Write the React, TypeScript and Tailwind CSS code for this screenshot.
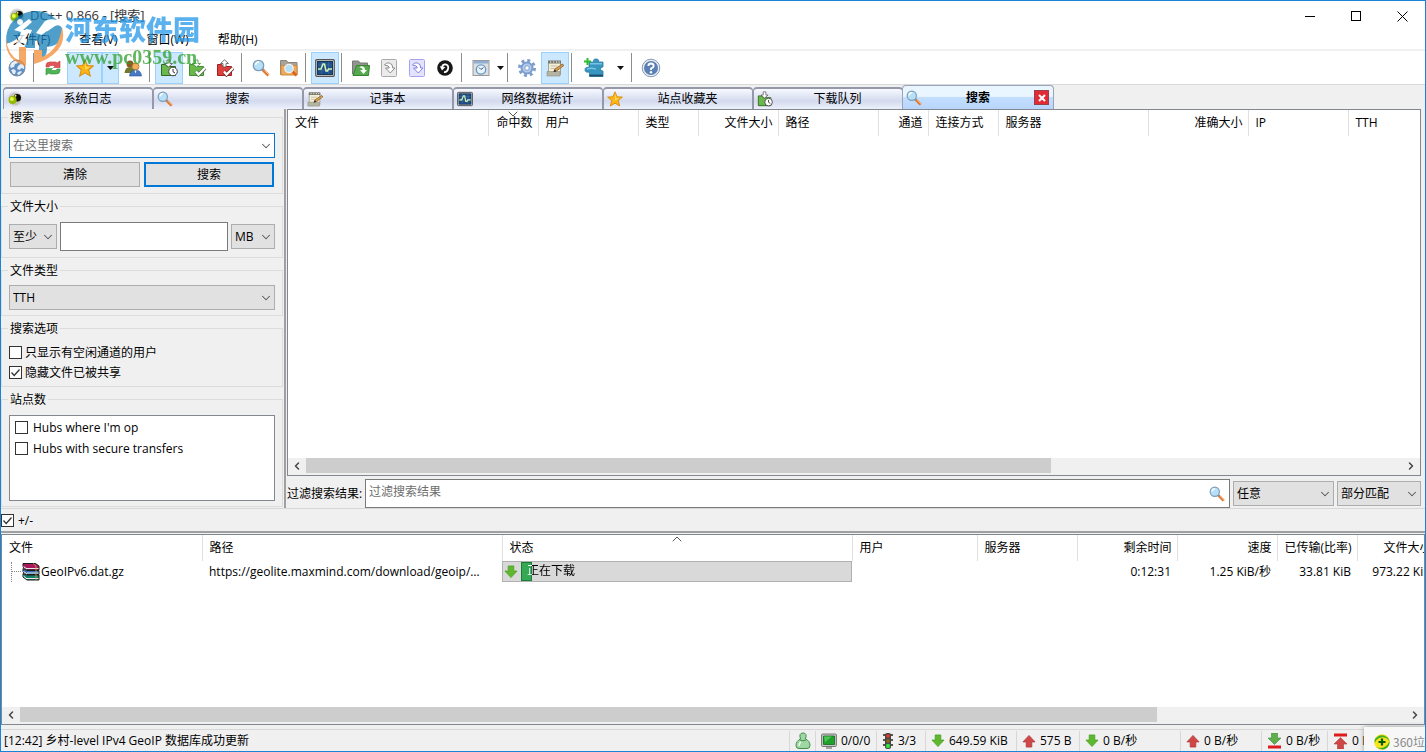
import { useState, type ReactNode } from 'react';
import { ChevronDown, ChevronLeft, ChevronRight, ChevronUp } from 'lucide-react';
import { cva } from 'class-variance-authority';
import clsx from 'clsx';

type IconProps = { className?: string };

const icon = 'h-4 w-4 shrink-0';

/* ── Icons ── */
function AppIcon({ className = icon }: IconProps) {
  return (
    <svg viewBox="0 0 16 16" className={className}>
      <circle cx="8" cy="8" r="7.5" fill="#dcdcdc" />
      <circle cx="8" cy="8" r="6.3" fill="#c3c3c3" />
      <circle cx="10.2" cy="6.8" r="3.8" fill="#0c0c0c" />
      <circle cx="5.6" cy="9" r="4" fill="#93b800" />
      <circle cx="4.9" cy="8" r="2" fill="#e8fb4a" />
      <circle cx="8.5" cy="4.8" r="1" fill="#e8fb4a" />
    </svg>
  );
}

function GlobeIcon() {
  return (
    <svg viewBox="0 0 18 18" className="h-[18px] w-[18px]">
      <circle cx="9" cy="9" r="8" fill="#5f8fc4" stroke="#7d8ea8" />
      <path d="M3 4.500Q6 1 9 2l1 2-3 1-1 3-3 1-1-2zM10 7l4-3 2 3v3l-3-1-1 2-3-1zM3 11l3-1 2 2-1 3-2 0zM10 13l3-1 1 1-3 3-2-1z" fill="#e4ecf4" />
      <path d="M4 5q4-4 9-1" fill="none" stroke="#fff" opacity=".6" />
    </svg>
  );
}

function RefreshIcon() {
  return (
    <svg viewBox="0 0 16 16" className={icon}>
      <path d="M1 7V5.500Q1 2 5 2h5q1.500 0 2 1l3-2v6.500H8.500l2-2H6Q4 5.500 4 7z" fill="#e0575b" stroke="#c2373d" strokeWidth=".6" />
      <path d="M15 9v1.500Q15 14 11 14H6q-1.500 0-2-1l-3 2V8.500h6.500l-2 2H10q2 0 2-1.500z" fill="#4fb457" stroke="#2f8f38" strokeWidth=".6" />
    </svg>
  );
}

function StarIcon({ className = icon }: IconProps) {
  return (
    <svg viewBox="0 0 16 16" className={className}>
      <path d="M8 .8l2.100 5 5.300.3-4.100 3.500 1.400 5.400L8 12.200 3.300 15l1.400-5.400L.6 6.100l5.300-.3z" fill="#fdb515" stroke="#d98b0c" strokeWidth=".9" />
      <path d="M8 2.500L9.200 7l3.300.2L8 9.500z" fill="#ffd95c" />
    </svg>
  );
}

function UsersIcon() {
  return (
    <svg viewBox="0 0 18 18" className="h-[18px] w-[18px]">
      <circle cx="6" cy="5" r="3.500" fill="#8a5a22" />
      <path d="M.5 14Q1 8 6 8t5.500 6z" fill="#6f7a2c" />
      <circle cx="11.500" cy="7.500" r="3.500" fill="#f0b060" stroke="#a8681f" strokeWidth=".7" />
      <path d="M5.500 17Q6 11 11.500 11t6 6z" fill="#4779c4" stroke="#2b5596" strokeWidth=".6" />
      <path d="M10.500 11.500h2l-1 3z" fill="#fff" />
    </svg>
  );
}

function Folder({ fill, stroke }: { fill: string; stroke: string }) {
  return <path d="M1.500 16.500v-11h4l1.500 2h8.500v9z" fill={fill} stroke={stroke} />;
}

function QueueIcon({ className = 'h-[18px] w-[18px] shrink-0' }: IconProps) {
  return (
    <svg viewBox="0 0 18 18" className={className}>
      <Folder fill="#6ab84a" stroke="#2f6b22" />
      <path d="M7 1h3v3.500h2.500l-4 3.500-4-3.500H7z" fill="#fff" stroke="#555" strokeWidth=".8" />
      <circle cx="13" cy="12.500" r="4.300" fill="#fff" stroke="#444" />
      <path d="M13 10v2.700l2 1.300" fill="none" stroke="#333" />
    </svg>
  );
}

function DownloadedIcon() {
  return (
    <svg viewBox="0 0 18 18" className="h-[18px] w-[18px]">
      <Folder fill="#6ab84a" stroke="#438f36" />
      <path d="M7 1h3v3.500h2.500l-4 3.500-4-3.500H7z" fill="#fff" stroke="#438f36" strokeWidth=".8" />
      <path d="M8 12.500l2.500 3L17 9" fill="none" stroke="#4b6e44" strokeWidth="3.800" />
      <path d="M8 12.500l2.500 3L17 9" fill="none" stroke="#fff" strokeWidth="2.400" />
    </svg>
  );
}

function UploadedIcon() {
  return (
    <svg viewBox="0 0 18 18" className="h-[18px] w-[18px]">
      <Folder fill="#df3f3c" stroke="#a31f1f" />
      <path d="M7 8V4.500H4.500l4-3.700 4 3.700H10V8z" fill="#fff" stroke="#555" strokeWidth=".8" />
      <path d="M8 12.500l2.500 3L17 9" fill="none" stroke="#6e2727" strokeWidth="3.800" />
      <path d="M8 12.500l2.500 3L17 9" fill="none" stroke="#fff" strokeWidth="2.400" />
    </svg>
  );
}

function SearchIcon({ className = 'h-[18px] w-[18px] shrink-0' }: IconProps) {
  return (
    <svg viewBox="0 0 18 18" className={className}>
      <path d="M10 10l6.500 6.500" stroke="#e2762c" strokeWidth="3" />
      <path d="M12.500 11.500l4.500 4.500" stroke="#f8bd88" strokeWidth="1" />
      <path d="M9.500 9.500l2 2" stroke="#8b95a0" strokeWidth="2.400" />
      <circle cx="6.500" cy="6.500" r="5.200" fill="#b5e0f7" stroke="#7f9bb5" strokeWidth="1.300" />
      <path d="M3.500 6Q4 3 7 3" fill="none" stroke="#fff" strokeWidth="1.500" />
    </svg>
  );
}

function FolderSearchIcon() {
  return (
    <svg viewBox="0 0 18 18" className="h-[18px] w-[18px]">
      <path d="M.5 15.500v-14h6l1.500 2h9v12z" fill="#a8a29a" stroke="#8b857c" />
      <path d="M1 16V6.500h16V16z" fill="#f0a95c" stroke="#cf8a42" />
      <path d="M12 12l4.500 4.500" stroke="#d9651e" strokeWidth="2.600" />
      <circle cx="9" cy="9.500" r="4.200" fill="#b5e0f7" stroke="#edf2f5" strokeWidth="1.300" />
    </svg>
  );
}

function StatsIcon({ className = 'h-5 w-5 shrink-0' }: IconProps) {
  return (
    <svg viewBox="0 0 20 20" className={className}>
      <rect x=".7" y="1.700" width="18.600" height="16.600" rx="1" fill="#d8d8d0" stroke="#555" strokeWidth="1.200" />
      <rect x="2.500" y="3.500" width="15" height="13" fill="#1f4f87" stroke="#16365c" />
      <path d="M3 7h14M3 12h14M6.500 4v12M13.500 4v12" stroke="#3c70a8" strokeWidth=".7" />
      <path d="M3 11h3l2-5h1.500L11 13h1.500l1-2H17" fill="none" stroke="#d3f3b3" strokeWidth="1.500" />
    </svg>
  );
}

function OpenFolderIcon() {
  return (
    <svg viewBox="0 0 18 18" className="h-[18px] w-[18px]">
      <path d="M.5 15V2h6L8 4h7.500v11z" fill="#8f9690" stroke="#747b75" />
      <path d="M1 16.500L4.500 6.500h13l-1 10z" fill="#53ab4b" stroke="#3a8334" />
      <path d="M7.500 8.500Q8.500 6.500 11 7.500q2.300 1 2 3.500h2l-3.500 4L8 11h2.500q.5-2-3-2.500z" fill="#fff" />
    </svg>
  );
}

function PageIcon({ blue }: { blue?: boolean }) {
  const line = blue ? '#a6a2ef' : '#a9a9a9';
  return (
    <svg viewBox="0 0 18 18" className="h-[18px] w-[18px]">
      <rect x="1.500" y=".5" width="15" height="17" rx="1" fill={blue ? '#e4e3fd' : '#ebebeb'} stroke={line} />
      <path
        d="M4.500 6Q6 3 9.500 4t3.200 5H15l-4.700 5L5.500 9h3.800q.3-2.500-4.800-3z"
        fill="#fff"
        stroke={blue ? '#847fe6' : '#8b8b8b'}
      />
    </svg>
  );
}

function BlackCircleIcon() {
  return (
    <svg viewBox="0 0 16 16" className={icon}>
      <circle cx="8" cy="8" r="7.800" fill="#171717" />
      <path d="M5 7Q6 3.800 9 4.500q3 1 2 4.500t-4 3" fill="none" stroke="#fff" strokeWidth="1.800" />
      <path d="M2.800 6.300l5.500.7L5 10.500z" fill="#fff" />
    </svg>
  );
}

function ClockWindowIcon() {
  return (
    <svg viewBox="0 0 18 18" className="h-[18px] w-[18px]">
      <rect x="1" y="1.500" width="16" height="15" fill="#dedede" stroke="#9a9a9a" />
      <path d="M1.500 2h15v2.500h-15z" fill="#8fb0d4" />
      <circle cx="9" cy="10.500" r="4.700" fill="#eaf3fc" stroke="#5f9bcf" strokeWidth="1.300" />
      <path d="M7 8.500l2 2 2.500-2" fill="none" stroke="#456" />
    </svg>
  );
}

function GearIcon() {
  return (
    <svg viewBox="0 0 20 20" className="h-5 w-5">
      <circle cx="10" cy="10" r="7.500" fill="none" stroke="#7d9dcc" strokeWidth="3" strokeDasharray="2.950 2.950" />
      <circle cx="10" cy="10" r="5.500" fill="#b5cbeb" stroke="#7b9dd0" strokeWidth="2" />
      <circle cx="10" cy="10" r="2.300" fill="#fff" stroke="#7b9dd0" />
    </svg>
  );
}

function NotepadIcon({ className = 'h-[18px] w-[18px] shrink-0' }: IconProps) {
  return (
    <svg viewBox="0 0 18 18" className={className}>
      <path d="M2.500 2.500h12v13h-12z" fill="#f3efd9" stroke="#a5a18e" />
      <path d="M2 1.500h13v3H2z" fill="#77776c" />
      <path d="M4 3h1.200M7 3h1.200M10 3h1.200M12.500 3h1.200" stroke="#fff" />
      <path d="M4.500 7h7M4.500 9.500h5" stroke="#c5c0aa" />
      <path d="M1 12.500h13V17H1z" fill="#b5b4a2" stroke="#8f8e7e" strokeWidth=".6" />
      <path d="M8 12.500l1-2.500 7.500-5 1.200 1.600L10.500 12z" fill="#e4a14a" stroke="#775121" strokeWidth=".8" />
      <path d="M7.500 13l1.300-2.500 1.500 1.700z" fill="#222" />
    </svg>
  );
}

function PuzzleIcon() {
  return (
    <svg viewBox="0 0 22 20" className="h-5 w-[22px]">
      <path d="M5 4h5q-1.500-3 2-3t2.500 3H19v5q-2.500 0-2.500 2t2.500 2v5.500H5.500V14Q1 15 1 11.800T5 9.500z" fill="#3795bf" stroke="#2b7ca5" strokeWidth=".8" />
      <path d="M5.500 17.500H19" stroke="#1c4e6c" strokeWidth="1.800" />
      <path d="M6 5.800h12M3 11q4-1.500 9 0" fill="none" stroke="#76c4e2" strokeWidth="1.500" />
      <path d="M3.500 0v7M0 3.500h7" stroke="#2bc02b" strokeWidth="2" />
    </svg>
  );
}

function HelpIcon() {
  return (
    <svg viewBox="0 0 20 20" className="h-5 w-5">
      <circle cx="10" cy="10" r="8.800" fill="#e9eef5" stroke="#8899b2" />
      <circle cx="10" cy="10" r="7" fill="#5a80b5" />
      <path d="M7.300 8Q7.500 5.500 10 5.500T12.700 8Q12.700 9.500 10 10.500V12" fill="none" stroke="#fff" strokeWidth="1.800" />
      <circle cx="10" cy="14.300" r="1.200" fill="#fff" />
    </svg>
  );
}

function ArchiveIcon() {
  return (
    <svg viewBox="0 0 18 18" className="h-[18px] w-[18px] shrink-0">
      <path d="M1 .5h12.500L17 3v4H5L1 4z" fill="#a8185a" stroke="#1c1c1c" />
      <path d="M1 5.500l4 2h12v4H5L1 9z" fill="#2f6fb5" stroke="#1c1c1c" />
      <path d="M1 10.500l4 1.500h12v5H5l-4-3z" fill="#15806a" stroke="#1c1c1c" />
      <path d="M5 5.500h11.500M5 10h11.500M5 15.500h11.500" stroke="#e9e9e9" />
      <path d="M1.500 3.500L5 6M1.500 8.500L5 11M1.500 13L5 16" stroke="#fff" />
      <path d="M11 .5l3 2.500v14" fill="none" stroke="#caa54a" strokeWidth=".8" />
    </svg>
  );
}

const arrowPath = 'M4.500 1h6v5.500H14L7.500 13.500 1 6.500h3.500z';

function DownIcon({ className = 'h-[14px] w-[14px] shrink-0' }: IconProps) {
  return (
    <svg viewBox="0 0 15 15" className={className}>
      <path d={arrowPath} fill="#5eb72c" stroke="#479f25" strokeWidth=".8" />
    </svg>
  );
}

function UpIcon() {
  return (
    <svg viewBox="0 0 15 15" className="h-[14px] w-[14px] shrink-0 rotate-180">
      <path d={arrowPath} fill="#d04747" stroke="#b03838" strokeWidth=".8" />
    </svg>
  );
}

function DownLimitIcon() {
  return (
    <svg viewBox="0 0 15 16" className="h-4 w-[15px] shrink-0">
      <path d="M4.500 0h6v5H14l-6.500 6.500L1 5h3.500z" fill="#5eae4c" stroke="#3c8f3c" strokeWidth=".6" />
      <path d="M1 12.500h13v3H1z" fill="#dd1c1c" />
    </svg>
  );
}

function UpLimitIcon() {
  return (
    <svg viewBox="0 0 15 16" className="h-4 w-[15px] shrink-0">
      <path d="M4.500 16h6v-5H14L7.500 4.500 1 11h3.500z" fill="#d04747" stroke="#b03838" strokeWidth=".6" />
      <path d="M1 .5h13v3H1z" fill="#dd1c1c" />
    </svg>
  );
}

function PersonIcon() {
  return (
    <svg viewBox="0 0 16 18" className="h-[18px] w-4">
      <path d="M5.500 7Q3.500 1 8 1t2.500 6q4.500 2 4.500 6.500 0 3-3 3H4q-3 0-3-3Q1 9 5.500 7z" fill="#9fd6a3" stroke="#3e8e4a" />
      <path d="M5 8q3 1.500 6 0" fill="none" stroke="#3e8e4a" />
      <path d="M4 14q0-3 2-4" fill="none" stroke="#eafbea" strokeWidth="1.500" />
    </svg>
  );
}

function MonitorIcon() {
  return (
    <svg viewBox="0 0 16 16" className={icon}>
      <rect x=".6" y="1" width="14.800" height="12.500" rx="1" fill="#c8c8c8" stroke="#767676" />
      <path d="M2.500 3h11v8.500h-11z" fill="#1fa22c" stroke="#13681b" strokeWidth=".8" />
      <path d="M3 3.500h8L4 9z" fill="#4cc557" />
      <path d="M5 15h6" stroke="#888" strokeWidth="1.500" />
    </svg>
  );
}

function TrafficIcon() {
  return (
    <svg viewBox="0 0 12 18" className="h-[18px] w-3">
      <path d="M1 3h10M1 8h10M1 13h10" stroke="#555" strokeWidth="2" />
      <rect x="3" y="1" width="6" height="16" rx="2" fill="#454545" />
      <circle cx="6" cy="4" r="2" fill="#d03b2c" />
      <circle cx="6" cy="9" r="2" fill="#86651f" />
      <circle cx="6" cy="14" r="2.200" fill="#33e03c" />
    </svg>
  );
}

function PlusBallIcon() {
  return (
    <svg viewBox="0 0 16 16" className={icon}>
      <circle cx="8" cy="8" r="7.800" fill="#f6e41c" />
      <path d="M1 5Q5 0 10 1.500q5 2 5.500 6Q12 2.500 7 3.500T1 9q-.8-2 0-4z" fill="#3fae2a" />
      <path d="M2 13q6 2.500 10-1 2.500-2 3.500-5 .5 5-3.500 7.500T2 13z" fill="#3fae2a" />
      <path d="M8 4.500v7M4.500 8h7" stroke="#075c0b" strokeWidth="2.200" />
    </svg>
  );
}

function CaretIcon() {
  return (
    <svg viewBox="0 0 7 4" className="h-1 w-[7px]">
      <path d="M0 0h7L3.500 4z" fill="#111" />
    </svg>
  );
}

/* ── Site stamp drawn over the title area ── */
function Stamp() {
  return (
    <div className="pointer-events-none absolute left-1 top-2 z-10 flex opacity-75">
      <svg viewBox="0 0 60 58" className="h-[58px] w-[60px] shrink-0">
        <path d="M1 35Q0 19 10 10 20 1 34 2q10 1 18 9-7-2-12 1l-9 12 6 2 13-9q5-2 7 2 1 10-4 15-5 4-13 4l-2-7-8 1v7H19l8-18-6-1Q13 32 1 35z" fill="#157fb9" />
        <path d="M9 21l15-11 3 3-9 8h6l-8 14q-4 5-9 6 7-10 9-18z" fill="#fff" />
        <path d="M15 10a3 3 0 1 0 .1 0z" fill="#fff" />
        <path d="M34 28l8-6v18q0 8-8 13z" fill="#157fb9" />
        <path d="M1 29Q2 45 14 52V38h7v19Q-1 51 1 29z" fill="#f38c35" />
        <path d="M57 18q4 14-5 24-8 9-23 13V41h8v7Q54 41 57 18z" fill="#f38c35" />
      </svg>
      <div className="flex flex-col pt-1">
        <span className="font-['Noto_Sans_CJK_SC',sans-serif] text-[27px] font-black leading-8 text-[#2497e8]">河东软件园</span>
        <span className="font-['Liberation_Serif',serif] text-xl font-bold leading-6 text-[#2da12d]">www.pc0359.cn</span>
      </div>
    </div>
  );
}

/* ── Toolbar ── */
const toolButton = cva('flex h-8 shrink-0 items-center justify-center border hover:bg-[#e5f3ff]', {
  variants: {
    active: { true: 'border-[#99d1ff] bg-[#cce8ff]', false: 'border-transparent' },
    size: { normal: 'w-7', wide: 'w-[35px]', arrow: 'w-[17px]', narrow: 'w-2.5' },
  },
  defaultVariants: { active: false, size: 'normal' },
});

type ToolProps = {
  label: string;
  active?: boolean;
  size?: 'normal' | 'wide' | 'arrow' | 'narrow';
  children: ReactNode;
};

function Tool({ label, active, size, children }: ToolProps) {
  return (
    <button type="button" aria-label={label} title={label} className={toolButton({ active: !!active, size })}>
      {children}
    </button>
  );
}

function Divider() {
  return <div className="ml-0.5 mr-[5px] h-[29px] w-px shrink-0 bg-[#8c8c8c]" />;
}

function Toolbar() {
  return (
    <div className="flex h-[34px] items-center border-b border-[#d9d9d9] bg-white pl-0.5">
      <Tool label="公共站点"><GlobeIcon /></Tool>
      <Divider />
      <Tool label="重新连接"><RefreshIcon /></Tool>
      <Tool label="站点收藏夹" active size="wide"><StarIcon className="h-[18px] w-[18px]" /></Tool>
      <Tool label="收藏菜单" active size="arrow"><CaretIcon /></Tool>
      <Tool label="用户"><UsersIcon /></Tool>
      <Divider />
      <Tool label="下载队列" active><QueueIcon /></Tool>
      <Tool label="已完成下载"><DownloadedIcon /></Tool>
      <Tool label="已完成上传"><UploadedIcon /></Tool>
      <Divider />
      <Tool label="搜索"><SearchIcon /></Tool>
      <Tool label="ADL 搜索"><FolderSearchIcon /></Tool>
      <Divider />
      <Tool label="网络数据统计" active><StatsIcon /></Tool>
      <Divider />
      <Tool label="打开文件列表"><OpenFolderIcon /></Tool>
      <Tool label="打开自己的列表"><PageIcon /></Tool>
      <Tool label="匹配队列"><PageIcon blue /></Tool>
      <Tool label="刷新文件列表"><BlackCircleIcon /></Tool>
      <Divider />
      <Tool label="最近"><ClockWindowIcon /></Tool>
      <Tool label="最近菜单" size="narrow"><CaretIcon /></Tool>
      <Divider />
      <Tool label="设置"><GearIcon /></Tool>
      <Tool label="记事本" active><NotepadIcon /></Tool>
      <Divider />
      <Tool label="插件" size="wide"><PuzzleIcon /></Tool>
      <Tool label="插件菜单" size="arrow"><CaretIcon /></Tool>
      <Divider />
      <Tool label="帮助"><HelpIcon /></Tool>
    </div>
  );
}

/* ── Tabs ── */
const tabs = [
  { label: '系统日志', Icon: AppIcon },
  { label: '搜索', Icon: SearchIcon },
  { label: '记事本', Icon: NotepadIcon },
  { label: '网络数据统计', Icon: StatsIcon },
  { label: '站点收藏夹', Icon: StarIcon },
  { label: '下载队列', Icon: QueueIcon },
  { label: '搜索', Icon: SearchIcon },
];

function TabStrip() {
  const [current, setCurrent] = useState(tabs.length - 1);
  return (
    <div className="flex h-6 items-end pl-0.5" role="tablist">
      {tabs.map(({ label, Icon }, i) => {
        const active = i === current;
        return (
          <div
            key={i}
            className={clsx(
              'flex min-w-0 items-center rounded-t border border-b-0 bg-linear-to-b pl-[3px] pr-1',
              active
                ? '-ml-px h-6 w-[152px] border-[#9aa5bb] from-[#e9f6ff] from-45% via-[#c3dfff] via-50% to-[#b8d4fb]'
                : 'h-[22px] w-[150px] border-t-2 border-[#9498a8] from-[#f7f9ff] via-[#d3daee] via-60% to-[#edf1fc]',
            )}
          >
            <button
              type="button"
              role="tab"
              aria-selected={active}
              onClick={() => setCurrent(i)}
              className="flex h-full min-w-0 flex-1 items-center"
            >
              <Icon className={icon} />
              <span className={clsx('flex-1 truncate text-center', active ? 'font-bold' : 'pl-1')}>{label}</span>
            </button>
            {active && (
              <button
                type="button"
                aria-label="关闭"
                className="flex h-[15px] w-[15px] items-center justify-center border border-[#99414a] bg-[#e22b35]"
              >
                <svg viewBox="0 0 8 8" className="h-2 w-2">
                  <path d="M1 1l6 6M7 1L1 7" stroke="#fff" strokeWidth="2" />
                </svg>
              </button>
            )}
          </div>
        );
      })}
    </div>
  );
}

/* ── Form parts ── */
function Select({ label, options, className }: { label: string; options: string[]; className: string }) {
  return (
    <div className={clsx('relative h-[25px] shrink-0', className)}>
      <select
        aria-label={label}
        className="h-full w-full appearance-none border border-[#adadad] bg-[#e1e1e1] pl-[3px] pr-4 outline-none"
      >
        {options.map((o) => (
          <option key={o}>{o}</option>
        ))}
      </select>
      <ChevronDown className="pointer-events-none absolute right-0.5 top-1.5 h-3.5 w-3.5 text-[#555]" strokeWidth={1.75} />
    </div>
  );
}

function Check({ label, checked, className }: { label: string; checked?: boolean; className?: string }) {
  return (
    <label className={clsx('flex items-center', className)}>
      <span className="relative h-[13px] w-[13px] shrink-0">
        <input
          type="checkbox"
          defaultChecked={checked}
          className="peer block h-[13px] w-[13px] appearance-none border border-[#333] bg-white"
        />
        <svg viewBox="0 0 13 13" className="pointer-events-none absolute inset-0 hidden h-[13px] w-[13px] peer-checked:block">
          <path d="M2.500 6.500l2.700 3L10.500 3.500" fill="none" stroke="#333" strokeWidth="1.300" />
        </svg>
      </span>
      <span className="whitespace-nowrap pt-px">{label}</span>
    </label>
  );
}

function Group({ title, className, children }: { title: string; className?: string; children: ReactNode }) {
  return (
    <fieldset className={clsx('border border-[#dcdcdc] px-[7px]', className)}>
      <legend className="-ml-px h-4 px-0.5 leading-[18px]">{title}</legend>
      {children}
    </fieldset>
  );
}

function SearchPanel() {
  return (
    <form className="flex w-[282px] shrink-0 flex-col gap-1 pb-px" onSubmit={(e) => e.preventDefault()}>
      <Group title="搜索" className="pb-1.5 pt-2">
        <div className="flex h-[25px] items-center border border-[#0078d7] bg-white pl-[3px] pr-px">
          <input
            aria-label="搜索"
            placeholder="在这里搜索"
            className="min-w-0 flex-1 outline-none placeholder:text-[#6d6d6d]"
          />
          <button type="button" aria-label="展开">
            <ChevronDown className="h-3.5 w-3.5 text-[#555]" strokeWidth={1.75} />
          </button>
        </div>
        <div className="mt-1 grid grid-cols-2 gap-1 px-px">
          <button type="reset" className="h-[25px] border border-[#adadad] bg-[#e1e1e1]">清除</button>
          <button type="submit" className="h-[25px] border-2 border-[#0078d7] bg-[#e1e1e1]">搜索</button>
        </div>
      </Group>

      <Group title="文件大小" className="pb-1.5 pt-2">
        <div className="flex items-center gap-[3px]">
          <Select label="大小条件" options={['至少', '至多']} className="w-12" />
          <input aria-label="文件大小" className="h-[29px] min-w-0 flex-1 border border-[#7a7a7a] bg-white px-1 outline-none" />
          <Select label="单位" options={['MB', 'KB', 'GB']} className="w-11" />
        </div>
      </Group>

      <Group title="文件类型" className="pb-[5px] pt-[7px]">
        <Select label="文件类型" options={['TTH', '任意']} className="w-full" />
      </Group>

      <Group title="搜索选项" className="pb-1 pt-1.5">
        <Check label="只显示有空闲通道的用户" className="h-5 gap-[3px]" />
        <Check label="隐藏文件已被共享" checked className="h-5 gap-[3px]" />
      </Group>

      <Group title="站点数" className="pb-[5px] pt-2">
        <div className="h-[86px] border border-[#828790] bg-white px-[5px] pt-px">
          <Check label="Hubs where I'm op" className="h-[21px] gap-[5px]" />
          <Check label="Hubs with secure transfers" className="h-[21px] gap-[5px]" />
        </div>
      </Group>
    </form>
  );
}

/* ── Lists ── */
type Column = { label: string; width: string; right?: boolean; sort?: 'up' | 'down' };

const resultColumns: Column[] = [
  { label: '文件', width: 'w-[200px]' },
  { label: '命中数', width: 'w-[50px]', right: true, sort: 'down' },
  { label: '用户', width: 'w-[100px]' },
  { label: '类型', width: 'w-[60px]' },
  { label: '文件大小', width: 'w-[80px]', right: true },
  { label: '路径', width: 'w-[100px]' },
  { label: '通道', width: 'w-[50px]', right: true },
  { label: '连接方式', width: 'w-[70px]' },
  { label: '服务器', width: 'w-[150px]' },
  { label: '准确大小', width: 'w-[100px]', right: true },
  { label: 'IP', width: 'w-[100px]' },
  { label: 'TTH', width: 'w-[200px]' },
];

const transferColumns: Column[] = [
  { label: '文件', width: 'w-[200px]' },
  { label: '路径', width: 'w-[300px]' },
  { label: '状态', width: 'w-[350px]', sort: 'up' },
  { label: '用户', width: 'w-[125px]' },
  { label: '服务器', width: 'w-[100px]' },
  { label: '剩余时间', width: 'w-[100px]', right: true },
  { label: '速度', width: 'w-[100px]', right: true },
  { label: '已传输(比率)', width: 'w-[80px]', right: true },
  { label: '文件大小', width: 'w-[80px]', right: true },
];

function ListHead({ columns }: { columns: Column[] }) {
  return (
    <thead>
      <tr className="h-[26px]">
        {columns.map((c) => {
          const Sort = c.sort === 'up' ? ChevronUp : ChevronDown;
          return (
            <th
              key={c.label}
              scope="col"
              className={clsx(
                'relative whitespace-nowrap border-r border-[#e0e0e0] font-normal',
                c.width,
                c.right ? 'pr-[5px] text-right' : 'pl-[7px] text-left',
              )}
            >
              {c.sort && (
                <Sort className="absolute -top-1 left-1/2 h-4 w-4 -translate-x-1/2 text-[#555]" strokeWidth={1.5} />
              )}
              {c.label}
            </th>
          );
        })}
      </tr>
    </thead>
  );
}

function ScrollBar({ thumb }: { thumb: string }) {
  return (
    <div className="flex h-[17px] shrink-0 items-start bg-[#f0f0f0]">
      <button type="button" aria-label="向左滚动" className="flex h-[15px] w-[18px] items-center justify-center">
        <ChevronLeft className="h-3 w-3 text-[#444]" strokeWidth={3} />
      </button>
      <div className="h-[15px] flex-1">
        <div className={clsx('h-full bg-[#cdcdcd]', thumb)} />
      </div>
      <button type="button" aria-label="向右滚动" className="flex h-[15px] w-[18px] items-center justify-center">
        <ChevronRight className="h-3 w-3 text-[#444]" strokeWidth={3} />
      </button>
    </div>
  );
}

function ResultsPane() {
  return (
    <div className="ml-px flex min-w-0 flex-1 flex-col pr-1">
      <div className="flex flex-1 flex-col overflow-hidden border border-[#828790] bg-white">
        <div className="flex-1 overflow-hidden">
          <table className="w-[1260px] table-fixed">
            <ListHead columns={resultColumns} />
          </table>
        </div>
        <ScrollBar thumb="w-[68%]" />
      </div>
      <div className="mt-[3px] flex items-center gap-[3px]">
        <label htmlFor="filter" className="w-[75px] whitespace-nowrap">过滤搜索结果:</label>
        <div className="flex h-[29px] min-w-0 flex-1 items-center border border-[#7a7a7a] bg-white pl-[3px] pr-1">
          <input
            id="filter"
            placeholder="过滤搜索结果"
            className="mb-1 min-w-0 flex-1 outline-none placeholder:text-[#6d6d6d]"
          />
          <SearchIcon className="h-4 w-4" />
        </div>
        <Select label="过滤列" options={['任意', '文件']} className="w-[101px]" />
        <Select label="匹配方式" options={['部分匹配', '完全匹配']} className="w-[84px]" />
      </div>
    </div>
  );
}

function Transfers() {
  return (
    <div className="mt-px flex min-h-[191px] flex-1 flex-col overflow-hidden border border-[#828790] bg-white">
      <div className="flex-1 overflow-hidden">
        <table className="w-[1435px] table-fixed whitespace-nowrap">
          <ListHead columns={transferColumns} />
          <tbody>
            <tr className="h-[21px]">
              <td>
                <div className="flex items-center">
                  <span className="ml-[9px] h-5 border-l border-dotted border-[#888]" />
                  <span className="mr-px w-[9px] border-t border-dotted border-[#888]" />
                  <ArchiveIcon />
                  <span className="pl-px">GeoIPv6.dat.gz</span>
                </div>
              </td>
              <td className="truncate pl-[7px] pr-5">https://geolite.maxmind.com/download/geoip/GeoIPv6.dat.gz</td>
              <td>
                <div className="flex h-[21px] items-center border border-[#b0b0b0] bg-[#d9d9d9] pl-px">
                  <DownIcon />
                  <div className="relative ml-[3px] h-full flex-1">
                    <div className="h-full w-[11px] border border-[#1c7a3a] bg-[#35a853]" />
                    <span className="absolute left-1.5 top-0 bg-linear-to-r from-white from-[5px] to-black to-[5px] bg-clip-text leading-[18px] text-transparent">
                      正在下载
                    </span>
                  </div>
                </div>
              </td>
              <td />
              <td />
              <td className="pr-1.5 text-right">0:12:31</td>
              <td className="pr-1.5 text-right">1.25 KiB/秒</td>
              <td className="pr-1.5 text-right">33.81 KiB</td>
              <td className="pr-1.5 text-right">973.22 KiB</td>
            </tr>
          </tbody>
        </table>
      </div>
      <ScrollBar thumb="w-[82%]" />
    </div>
  );
}

/* ── Status bar ── */
const statusCells = [
  { Icon: PersonIcon, text: '', width: 'w-[26px]' },
  { Icon: MonitorIcon, text: '0/0/0', width: 'w-[61px]' },
  { Icon: TrafficIcon, text: '3/3', width: 'w-[49px]' },
  { Icon: DownIcon, text: '649.59 KiB', width: 'w-[91px]' },
  { Icon: UpIcon, text: '575 B', width: 'w-[63px]' },
  { Icon: DownIcon, text: '0 B/秒', width: 'w-[101px]' },
  { Icon: UpIcon, text: '0 B/秒', width: 'w-[81px]' },
  { Icon: DownLimitIcon, text: '0 B/秒', width: 'w-[66px]' },
  { Icon: UpLimitIcon, text: '0 B/秒', width: 'w-[98px]' },
];

function StatusBar() {
  return (
    <footer className="mt-1 flex h-[22px] shrink-0 items-center border-t border-[#d7d7d7]">
      <span className="min-w-0 flex-1 truncate pl-[3px]">[12:42] 乡村-level IPv4 GeoIP 数据库成功更新</span>
      {statusCells.map(({ Icon, text, width }, i) => (
        <div
          key={i}
          className={clsx('flex h-5 shrink-0 items-center gap-1 whitespace-nowrap border-l border-[#d7d7d7] pl-[5px]', width)}
        >
          <Icon />
          {text && <span>{text}</span>}
        </div>
      ))}
    </footer>
  );
}

export default function App() {
  return (
    <div className="relative flex min-h-screen flex-col overflow-hidden border border-[#1883d7] bg-[#f0f0f0] font-['Open_Sans','Noto_Sans_CJK_SC',sans-serif] text-xs text-black">
      <header className="border-b-2 border-[#f0f0f0] bg-white">
        <div className="flex h-[30px] items-center pl-2">
          <AppIcon />
          <h1 className="flex-1 pl-[5px] text-[13px] text-[#333]">DC++ 0.866 - [搜索]</h1>
          <button type="button" aria-label="最小化" className="flex h-full w-[46px] items-center justify-center">
            <span className="h-px w-2.5 bg-black" />
          </button>
          <button type="button" aria-label="最大化" className="flex h-full w-[46px] items-center justify-center">
            <span className="h-2.5 w-2.5 border border-black" />
          </button>
          <button type="button" aria-label="关闭" className="flex h-full w-[46px] items-center justify-center">
            <svg viewBox="0 0 11 11" className="h-[11px] w-[11px]">
              <path d="M.5.5l10 10M10.500.5l-10 10" stroke="#000" />
            </svg>
          </button>
        </div>
        <nav className="flex h-[18px] items-center gap-[29px] pl-3">
          <button type="button">文件(F)</button>
          <button type="button">查看(V)</button>
          <button type="button">窗口(W)</button>
          <button type="button">帮助(H)</button>
        </nav>
      </header>
      <Toolbar />
      <TabStrip />

      <main className="flex flex-1 flex-col">
        <div className="flex border-b border-[#d7d7d7]">
          <SearchPanel />
          <div className="ml-px w-0.5 shrink-0 bg-[#a0a0a0]" />
          <ResultsPane />
        </div>
        <Check label="+/-" checked className="h-[22px] gap-1" />
        <div className="h-0.5 bg-[#a0a0a0]" />
        <Transfers />
      </main>
      <StatusBar />
      <Stamp />

      {/* Cleaner pop-up sliding in at the corner */}
      <aside className="absolute -right-px -bottom-px flex h-[25px] w-[62px] items-center gap-[3px] overflow-hidden whitespace-nowrap bg-[#f7f7f7] pl-2.5 pt-1 font-['Noto_Sans_CJK_SC',sans-serif] text-[#8a8a8a] shadow-[0_0_5px_#999]">
        <PlusBallIcon />
        <span>360垃圾</span>
      </aside>
    </div>
  );
}
